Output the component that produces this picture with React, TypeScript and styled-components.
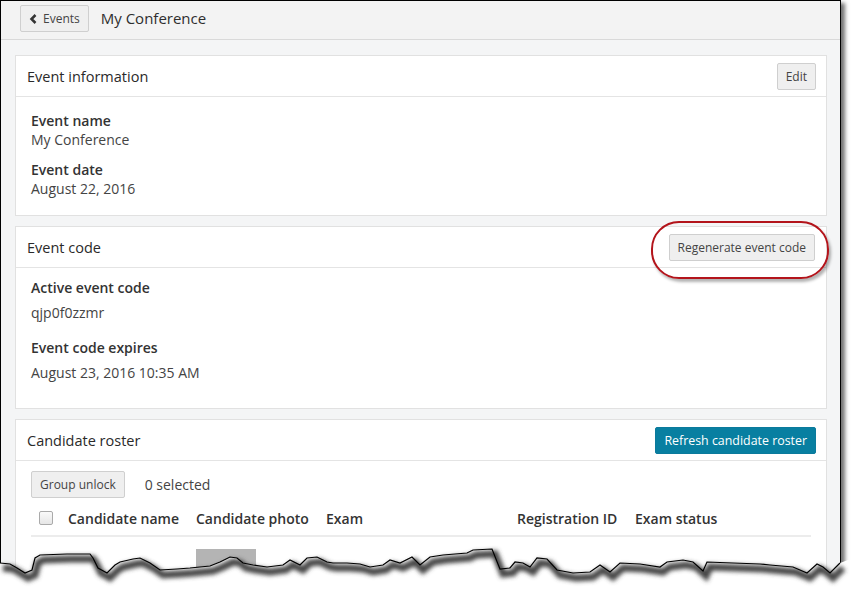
import React from 'react'
import styled, { createGlobalStyle } from 'styled-components'

const GlobalStyle = createGlobalStyle`
  html, body {
    margin: 0;
    padding: 0;
    background: #ffffff;
  }
  body {
    font-family: "Open Sans", "Liberation Sans", sans-serif;
    color: #333333;
  }
`

const Page = styled.div`
  position: relative;
  width: 857px;
  height: 598px;
  overflow: hidden;
  background: #ffffff;
`

const Frame = styled.div`
  width: 841px;
  height: 585px;
  box-sizing: border-box;
  border: 1px solid #000000;
  border-bottom: none;
  background: #f4f5f6;
  overflow: hidden;
  box-shadow: 4px 3px 4px rgba(0, 0, 0, 0.55);
`

const TopBar = styled.header`
  display: flex;
  align-items: flex-start;
  gap: 12px;
  height: 34px;
  padding: 4px 0 0 19px;
  background: #f3f3f3;
  border-bottom: 1px solid #d9d9d9;
`

const PageTitle = styled.h1`
  margin: 0;
  font-size: 15px;
  font-weight: 400;
  color: #2e2e2e;
  line-height: 27px;
`

const Content = styled.main`
  display: flex;
  flex-direction: column;
  gap: 10px;
  padding: 15px 13px 0 14px;
`

const Card = styled.section`
  background: #ffffff;
  border: 1px solid #e1e1e1;
`

const CardHeader = styled.div`
  display: flex;
  align-items: center;
  justify-content: space-between;
  height: 40px;
  padding: 0 10px 0 11px;
  border-bottom: 1px solid #e4e4e4;
`

const CardTitle = styled.h2`
  margin: 0;
  font-size: 14.5px;
  font-weight: 400;
  color: #2a2a2a;
`

const CardBody = styled.div<{ $top: number; $bottom: number; $gap?: number }>`
  display: flex;
  flex-direction: column;
  gap: ${p => p.$gap ?? 0}px;
  padding: ${p => p.$top}px 15px ${p => p.$bottom}px 15px;
`

const Field = styled.div`
  display: flex;
  flex-direction: column;
`

const Label = styled.div`
  font-size: 14px;
  font-weight: 600;
  line-height: 20px;
  color: #333333;
`

const Value = styled.div<{ $offset: number }>`
  margin-top: ${p => p.$offset}px;
  font-size: 14px;
  line-height: 20px;
  color: #444444;
`

const Button = styled.button<{ $primary?: boolean }>`
  display: inline-flex;
  align-items: center;
  gap: 5px;
  height: 27px;
  padding: 0 8px;
  border: 1px solid ${p => (p.$primary ? '#0b7a9c' : '#cfcfcf')};
  border-radius: 2px;
  background: ${p => (p.$primary ? '#087fa1' : '#efefef')};
  color: ${p => (p.$primary ? '#ffffff' : '#444444')};
  font-family: "Open Sans", "Liberation Sans", sans-serif;
  font-size: ${p => (p.$primary ? 12.4 : 12)}px;
  cursor: pointer;
`

const Highlight = styled.div`
  position: relative;
  margin-right: 1px;

  &::after {
    content: '';
    position: absolute;
    left: -18px;
    top: -13px;
    right: -14px;
    bottom: -18px;
    border: 2.5px solid #b3141b;
    border-radius: 28px;
    box-shadow: 2px 3px 3px rgba(0, 0, 0, 0.3);
    pointer-events: none;
  }
`

const Toolbar = styled.div`
  display: flex;
  align-items: center;
  gap: 20px;
`

const Muted = styled.span`
  font-size: 14px;
  color: #444444;
`

const Table = styled.div`
  display: flex;
  flex-direction: column;
`

const Row = styled.div<{ $head?: boolean }>`
  display: grid;
  grid-template-columns: 37px 128px 130px 191px 118px 1fr;
  align-items: ${p => (p.$head ? 'center' : 'start')};
  box-sizing: border-box;
  height: ${p => (p.$head ? 39 : 50)}px;
  padding-top: ${p => (p.$head ? 4 : 12)}px;
  border-bottom: ${p => (p.$head ? '2px solid #ececec' : 'none')};
`

const HeadCell = styled.div`
  font-size: 14px;
  font-weight: 600;
  color: #333333;
  white-space: nowrap;
`

const Check = styled.span`
  width: 12px;
  height: 12px;
  margin: 0 0 1px 8px;
  border: 1px solid #aaaaaa;
  border-radius: 2px;
  background: linear-gradient(#fafafa, #e6e6e6);
`

const Photo = styled.div`
  width: 60px;
  height: 40px;
  background: #b4b4b4;
`

const Tear = styled.svg`
  position: absolute;
  left: 0;
  top: 540px;
`

const tearPoints = [
  [0, 563], [10, 564], [17, 568], [25, 573], [32, 570], [35, 558], [40, 555], [67, 554], [90, 554],
  [93, 558], [98, 568], [107, 573], [115, 565], [120, 562], [133, 559], [140, 558], [150, 563],
  [160, 570], [177, 569], [190, 568], [200, 567], [210, 566], [220, 562], [230, 557], [237, 558],
  [243, 563], [253, 565], [267, 567], [283, 565], [290, 560], [300, 565], [307, 558], [317, 557],
  [327, 562], [333, 563], [347, 563], [360, 564], [370, 567], [383, 565], [390, 560], [400, 563],
  [412, 557], [420, 565], [430, 557], [443, 555], [467, 553], [473, 550], [492, 549], [500, 569],
  [510, 568], [515, 562], [523, 563], [530, 567], [537, 558], [547, 559], [557, 570], [573, 573],
  [590, 572], [600, 565], [610, 572], [620, 563], [640, 564], [660, 567], [667, 562], [683, 560],
  [693, 562], [703, 571], [707, 562], [733, 563], [760, 564], [770, 565], [793, 567], [807, 573],
  [817, 564], [823, 567], [830, 573], [840, 563],
]

function TornEdge() {
  const line = tearPoints.map(([x, y]) => `${x},${y}`).join(' ')
  const shadow = tearPoints.map(([x, y]) => `${x + 3},${y + 5}`).join(' ')
  return (
    <Tear width={857} height={58} viewBox="0 540 857 58">
      <defs>
        <filter id="blur" x="-5%" y="-50%" width="110%" height="200%">
          <feGaussianBlur stdDeviation="2" />
        </filter>
      </defs>
      <polygon points={`${line} 848,560 857,560 857,598 0,598`} fill="#ffffff" />
      <polyline points={shadow} fill="none" stroke="#444444" strokeWidth={7} filter="url(#blur)" />
      <polyline points={line} fill="none" stroke="#000000" strokeWidth={1.2} />
    </Tear>
  )
}

function App() {
  return (
    <Page>
      <GlobalStyle />
      <Frame>
        <TopBar>
          <Button>
            <svg width="9" height="10" viewBox="0 0 9 10">
              <path d="M6.5 1 L2.5 5 L6.5 9" fill="none" stroke="#333" strokeWidth="2.5" />
            </svg>
            Events
          </Button>
          <PageTitle>My Conference</PageTitle>
        </TopBar>
        <Content>
          <Card>
            <CardHeader>
              <CardTitle>Event information</CardTitle>
              <Button>Edit</Button>
            </CardHeader>
            <CardBody $top={14} $bottom={16} $gap={10}>
              <Field>
                <Label>Event name</Label>
                <Value $offset={-1}>My Conference</Value>
              </Field>
              <Field>
                <Label>Event date</Label>
                <Value $offset={-1}>August 22, 2016</Value>
              </Field>
            </CardBody>
          </Card>
          <Card>
            <CardHeader>
              <CardTitle>Event code</CardTitle>
              <Highlight>
                <Button>Regenerate event code</Button>
              </Highlight>
            </CardHeader>
            <CardBody $top={10} $bottom={25} $gap={15}>
              <Field>
                <Label>Active event code</Label>
                <Value $offset={5}>qjp0f0zzmr</Value>
              </Field>
              <Field>
                <Label>Event code expires</Label>
                <Value $offset={5}>August 23, 2016 10:35 AM</Value>
              </Field>
            </CardBody>
          </Card>
          <Card>
            <CardHeader>
              <CardTitle>Candidate roster</CardTitle>
              <Button $primary>Refresh candidate roster</Button>
            </CardHeader>
            <CardBody $top={10} $bottom={0}>
              <Toolbar>
                <Button>Group unlock</Button>
                <Muted>0 selected</Muted>
              </Toolbar>
              <Table>
                <Row $head>
                  <Check />
                  <HeadCell>Candidate name</HeadCell>
                  <HeadCell>Candidate photo</HeadCell>
                  <HeadCell>Exam</HeadCell>
                  <HeadCell>Registration ID</HeadCell>
                  <HeadCell>Exam status</HeadCell>
                </Row>
                <Row>
                  <span />
                  <span />
                  <Photo />
                </Row>
              </Table>
            </CardBody>
          </Card>
        </Content>
      </Frame>
      <TornEdge />
    </Page>
  )
}

export default App
